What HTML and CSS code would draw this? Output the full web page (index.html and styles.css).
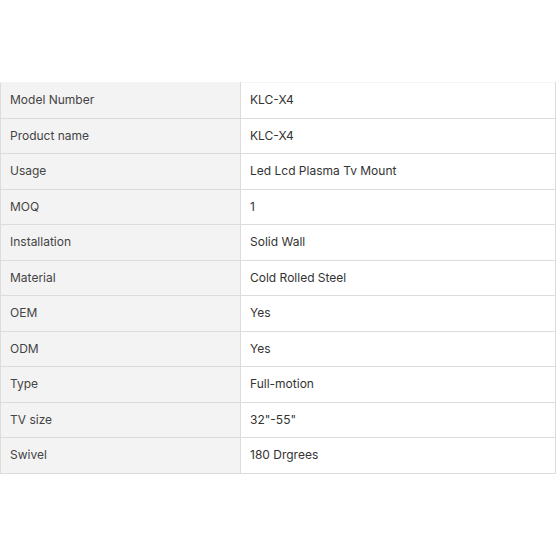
FILE: index.html
```html
<!DOCTYPE html>
<html>
<head>
<meta charset="utf-8">
<link rel="stylesheet" href="styles.css">
</head>
<body>
<table class="specs">
  <tbody>
    <tr><td class="key">Model Number</td><td class="val">KLC-X4</td></tr>
    <tr><td class="key">Product name</td><td class="val">KLC-X4</td></tr>
    <tr><td class="key">Usage</td><td class="val">Led Lcd Plasma Tv Mount</td></tr>
    <tr><td class="key">MOQ</td><td class="val">1</td></tr>
    <tr><td class="key">Installation</td><td class="val">Solid Wall</td></tr>
    <tr><td class="key">Material</td><td class="val">Cold Rolled Steel</td></tr>
    <tr><td class="key">OEM</td><td class="val">Yes</td></tr>
    <tr><td class="key">ODM</td><td class="val">Yes</td></tr>
    <tr><td class="key">Type</td><td class="val">Full-motion</td></tr>
    <tr><td class="key">TV size</td><td class="val">32"-55"</td></tr>
    <tr><td class="key">Swivel</td><td class="val">180 Drgrees</td></tr>
  </tbody>
</table>
</body>
</html>
```
FILE: styles.css
```css
html, body {
  margin: 0;
  padding: 0;
  background: #fff;
}
body {
  padding-top: 82px;
  font-family: Inter, "Noto Sans", sans-serif;
  font-size: 12px;
  color: #333;
}
.specs {
  width: 556px;
  border-collapse: collapse;
  table-layout: fixed;
}
.specs td {
  border: 1px solid #dcdcdc;
  height: 35.5px;
  padding: 0 9px;
  box-sizing: border-box;
  vertical-align: middle;
  line-height: 16px;
}
.specs tr:first-child td {
  border-top-color: #f4f4f4;
}
.specs .key {
  width: 240px;
  background: #f3f3f3;
  color: #444;
}
.specs .val {
  background: #fff;
}
```
